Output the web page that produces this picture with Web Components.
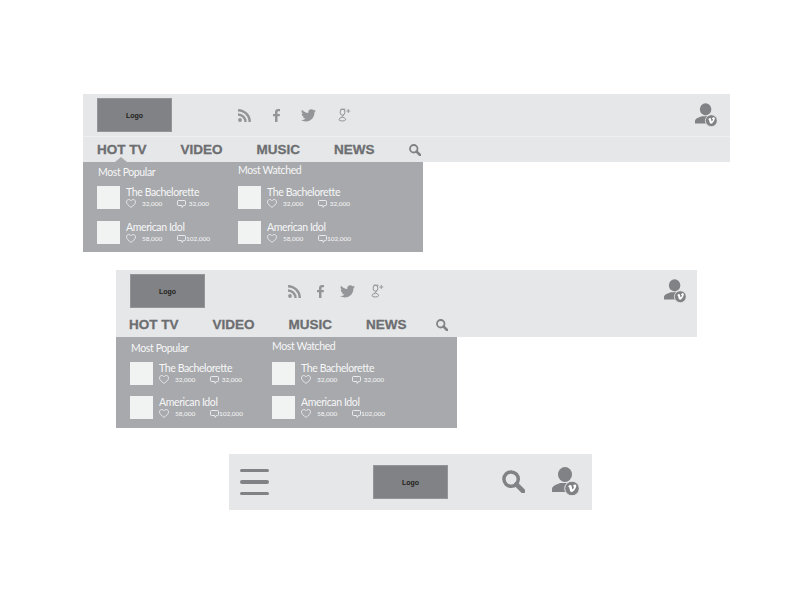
<!DOCTYPE html>
<html>
<head>
<meta charset="utf-8">
<title>Header wireframes</title>
<style>
  html, body { margin: 0; background: #fff; }
  body { font-family: "Lato", "Liberation Sans", sans-serif; }
  main { display: flex; flex-direction: column; padding-top: 94px; }
</style>
</head>
<body>
<main>
  <site-header divided caret style="margin-left:83px; width:647px; --top-h:42px; --nav-h:26px; --nav-pad:14px; --social-start:66px; --social-gap:21.5px; --end-pad:13px; --head-box:24px; --head-line:20px; --col-step:141px; --row-gap:12px">
    <show-column slot="columns">
      <span slot="heading">Most Popular</span>
      <show-row name="The Bachelorette" likes="32,000" comments="32,000"></show-row>
      <show-row name="American Idol" likes="58,000" comments="102,000"></show-row>
    </show-column>
    <show-column slot="columns" lift>
      <span slot="heading">Most Watched</span>
      <show-row name="The Bachelorette" likes="32,000" comments="32,000"></show-row>
      <show-row name="American Idol" likes="58,000" comments="102,000"></show-row>
    </show-column>
  </site-header>

  <site-header style="margin:18px 0 0 116px; width:581px; --top-h:42px; --nav-h:25px; --nav-pad:13px; --search-nudge:-5px; --social-start:83px; --social-gap:16px; --end-pad:11px; --head-box:25px; --head-line:22px; --col-step:142px; --row-gap:11px; --drop-w:341px; --drop-h:91px">
    <show-column slot="columns">
      <span slot="heading">Most Popular</span>
      <show-row name="The Bachelorette" likes="32,000" comments="32,000"></show-row>
      <show-row name="American Idol" likes="58,000" comments="102,000"></show-row>
    </show-column>
    <show-column slot="columns" lift>
      <span slot="heading">Most Watched</span>
      <show-row name="The Bachelorette" likes="32,000" comments="32,000"></show-row>
      <show-row name="American Idol" likes="58,000" comments="102,000"></show-row>
    </show-column>
  </site-header>

  <mobile-header style="margin:26px 0 0 229px"></mobile-header>
</main>

<script>
// grey logo block, same size in all three headers
class WireLogo extends HTMLElement {
  constructor() {
    super();
    this.attachShadow({ mode: 'open' }).innerHTML = `
      <style>
        :host { display: flex; flex: none; width: 75px; height: 34px; box-sizing: border-box;
                align-items: center; justify-content: center; background: #808285; border: 1px solid #939598;
                font: bold 7px "Liberation Sans", sans-serif; color: #231f20; }
      </style>
      Logo`;
  }
}

class SearchGlass extends HTMLElement {
  constructor() {
    super();
    const size = this.getAttribute('size') || 12;
    this.attachShadow({ mode: 'open' }).innerHTML = `
      <style>:host { display: block; flex: none; line-height: 0; }</style>
      <svg width="${size}" height="${size}" viewBox="0 0 24 24">
        <circle cx="9.5" cy="9.5" r="7.5" fill="none" stroke="#808285" stroke-width="3.6"/>
        <path d="M15 15l7 7" stroke="#808285" stroke-width="5" stroke-linecap="round"/>
      </svg>`;
  }
}

// person with the round vimeo badge on the shoulder
class UserBadge extends HTMLElement {
  constructor() {
    super();
    const w = this.getAttribute('width') || 22;
    const h = Math.round(w * 29 / 27);
    this.attachShadow({ mode: 'open' }).innerHTML = `
      <style>:host { display: block; flex: none; line-height: 0; }</style>
      <svg width="${w}" height="${h}" viewBox="0 0 27 29">
        <ellipse cx="13" cy="7.500" rx="7" ry="7.500" fill="#808285"/>
        <path d="M0 25v-3c0-3 4-4.500 8.500-6h9c3 1 6 2 7 4v5z" fill="#808285"/>
        <circle cx="20" cy="21.500" r="7.300" fill="#808285" stroke="#e6e7e8" stroke-width="1"/>
        <path d="M16.300 19.300c.9-.8 1.700-1.300 2.300-1.200.8.100 1 .9 1.200 2 .2 1 .4 2.200.8 2.200.5 0 1.500-1.800 1.300-2.600-.1-.5-.7-.4-1.200-.2.500-1.500 1.400-2.200 2.500-2.100 1 .1 1.300.9 1 2.200-.5 2-2.600 5.200-4.400 5.500-1.600.2-2-2.200-2.400-3.800-.2-.9-.4-1.500-.7-1.500l-.8.400z" fill="#fff"/>
      </svg>`;
  }
}

class SocialLinks extends HTMLElement {
  constructor() {
    super();
    this.attachShadow({ mode: 'open' }).innerHTML = `
      <style>
        :host { display: flex; align-items: center; gap: var(--social-gap, 21px); margin-left: var(--social-start, 66px); }
        svg { display: block; flex: none; }
      </style>
      <svg width="13" height="13" viewBox="0 0 13 13" fill="none" stroke="#939598" stroke-width="2.400">
        <circle cx="2" cy="11" r="1.900" fill="#939598" stroke="none"/>
        <path d="M0 5.500a7.500 7.500 0 0 1 7.500 7.500"/>
        <path d="M0 1.200a11.800 11.800 0 0 1 11.800 11.800"/>
      </svg>
      <svg width="7" height="13" viewBox="0 0 7 13">
        <path d="M2 13V7.200H0V5h2V3.300C2 1.100 3.200 0 5 0h2v2.300H5.700C4.800 2.300 4.500 2.700 4.500 3.500V5H7l-.4 2.200H4.500V13z" fill="#939598"/>
      </svg>
      <svg width="15" height="13" viewBox="0 0 24 20">
        <path transform="translate(0 -2.300)" d="M23.953 4.570a10 10 0 0 1-2.825.775 4.958 4.958 0 0 0 2.163-2.723c-.951.555-2.005.959-3.127 1.184a4.920 4.920 0 0 0-8.384 4.482C7.690 8.095 4.067 6.130 1.640 3.162a4.822 4.822 0 0 0-.666 2.475c0 1.710.870 3.213 2.188 4.096a4.904 4.904 0 0 1-2.228-.616v.060a4.923 4.923 0 0 0 3.946 4.827 4.996 4.996 0 0 1-2.212.085 4.936 4.936 0 0 0 4.604 3.417 9.867 9.867 0 0 1-6.102 2.105c-.390 0-.779-.023-1.170-.067a13.995 13.995 0 0 0 7.557 2.209c9.053 0 13.998-7.496 13.998-13.985 0-.210 0-.420-.015-.630A9.935 9.935 0 0 0 24 4.590z" fill="#939598"/>
      </svg>
      <svg width="13" height="14" viewBox="0 0 13 14" fill="none" stroke="#939598" stroke-width="1">
        <ellipse cx="4.500" cy="4.200" rx="2.400" ry="3"/>
        <path d="M2.500 1.200h5M6 7c-2 .6-2.500 1.700-1 2.300 2 .8 3 1.500 2.500 2.700-.6 1.300-6 1.400-6.500-.2-.3-1.200 1.500-2.300 3.500-2.500"/>
        <path d="M10.300 1v4M8.300 3h4" stroke-width=".9"/>
      </svg>`;
  }
}

// one thumbnail + title + like / comment counts
class ShowRow extends HTMLElement {
  constructor() {
    super();
    this.attachShadow({ mode: 'open' }).innerHTML = `
      <style>
        :host { display: flex; height: 23px; color: #f7f7f8; }
        .thumb { width: 23px; height: 23px; background: #f1f2f2; flex: none; }
        .info { margin-left: 6px; display: flex; flex-direction: column; }
        .name { font-size: 10.500px; line-height: 12px; letter-spacing: -.38px; white-space: nowrap; }
        .stats { display: flex; align-items: center; height: 11px; font-size: 6.500px; }
        .likes { width: 35px; margin-left: 6px; flex: none; }
        .comments { width: 23px; text-align: right; flex: none; }
        svg { display: block; flex: none; }
      </style>
      <div class="thumb"></div>
      <div class="info">
        <div class="name"></div>
        <div class="stats">
          <svg width="10" height="9" viewBox="0 0 10 9">
            <path d="M5 8.400C2.500 6.500.500 5 .500 2.900.500 1.500 1.500.500 2.800.500c1 0 1.700.500 2.200 1.300C5.500 1 6.200.500 7.200.500c1.300 0 2.300 1 2.300 2.400C9.500 5 7.500 6.500 5 8.400z" fill="none" stroke="#f1f2f2" stroke-width=".8"/>
          </svg>
          <span class="likes"></span>
          <svg width="9" height="8" viewBox="0 0 9 8">
            <path d="M1.300.500h6.400c.5 0 .8.300.8.800v3.400c0 .5-.3.800-.8.800H6.400L5.200 7.400 4.800 5.500H1.300c-.5 0-.8-.3-.8-.8V1.300c0-.5.300-.8.800-.8z" fill="none" stroke="#f1f2f2" stroke-width=".9"/>
          </svg>
          <span class="comments"></span>
        </div>
      </div>`;
    this.shadowRoot.querySelector('.name').textContent = this.getAttribute('name');
    this.shadowRoot.querySelector('.likes').textContent = this.getAttribute('likes');
    this.shadowRoot.querySelector('.comments').textContent = this.getAttribute('comments');
  }
}

class ShowColumn extends HTMLElement {
  constructor() {
    super();
    this.attachShadow({ mode: 'open' }).innerHTML = `
      <style>
        :host { display: block; }
        .head { height: var(--head-box, 24px); line-height: var(--head-line, 20px);
                padding-left: 1px; font-size: 10.500px; letter-spacing: -.38px; color: #f7f7f8; white-space: nowrap; }
        /* second column heading sits 2px higher in the reference */
        :host([lift]) .head { line-height: calc(var(--head-line, 20px) - 4px); padding-left: 0; }
        .rows { display: flex; flex-direction: column; gap: var(--row-gap, 12px); }
      </style>
      <div class="head"><slot name="heading"></slot></div>
      <div class="rows"><slot></slot></div>`;
  }
}

// desktop header: logo row, nav row and the open dropdown under it
class SiteHeader extends HTMLElement {
  constructor() {
    super();
    this.attachShadow({ mode: 'open' }).innerHTML = `
      <style>
        :host { display: block; flex: none; }
        .bar { background: #e6e7e8; }
        .top { display: flex; align-items: center; height: var(--top-h, 42px); padding: 0 var(--end-pad, 13px) 0 14px; box-sizing: border-box; }
        :host([divided]) .top { border-bottom: 1px solid #eeeff0; height: calc(var(--top-h, 42px) + 1px); }
        user-badge { margin-left: auto; }
        .nav { display: flex; align-items: center; gap: 34px; height: var(--nav-h, 26px); padding-left: var(--nav-pad, 14px);
               font: bold 13.500px "Liberation Sans", sans-serif; color: #6d6e71; -webkit-text-stroke: .3px #6d6e71; }
        :host([divided]) .nav { height: calc(var(--nav-h, 26px) - 1px); }
        .nav span { position: relative; white-space: nowrap; }
        .nav search-glass { margin-left: var(--search-nudge, 0); }
        .caret { display: none; position: absolute; left: 18px; top: 15px; width: 0; height: 0;
                 border: 6.500px solid transparent; border-top: 0; border-bottom: 5px solid #a7a9ac; }
        :host([caret]) .caret { display: block; }
        .drop { display: grid; grid-template-columns: var(--col-step, 141px) 1fr; box-sizing: border-box;
                width: var(--drop-w, 340px); height: var(--drop-h, 90px); padding-left: 14px; background: #a7a9ac; }
      </style>
      <div class="bar">
        <div class="top">
          <wire-logo></wire-logo>
          <social-links></social-links>
          <user-badge width="22"></user-badge>
        </div>
        <div class="nav">
          <span>HOT TV<i class="caret"></i></span>
          <span>VIDEO</span>
          <span>MUSIC</span>
          <span>NEWS</span>
          <search-glass size="12"></search-glass>
        </div>
      </div>
      <div class="drop"><slot name="columns"></slot></div>`;
  }
}

class MobileHeader extends HTMLElement {
  constructor() {
    super();
    this.attachShadow({ mode: 'open' }).innerHTML = `
      <style>
        :host { display: flex; flex: none; align-items: center; box-sizing: border-box; width: 363px; height: 56px;
                padding-left: 11px; background: #e6e7e8; }
        .burger { display: flex; flex-direction: column; gap: 8px; width: 29px; flex: none; margin-right: 104px; }
        .burger i { display: block; height: 3.500px; border-radius: 2px; background: #808285; }
        search-glass { margin: 0 27px 2px 54px; }
        user-badge { margin-bottom: 1px; }
      </style>
      <div class="burger"><i></i><i></i><i></i></div>
      <wire-logo></wire-logo>
      <search-glass size="23"></search-glass>
      <user-badge width="27"></user-badge>`;
  }
}

customElements.define('wire-logo', WireLogo);
customElements.define('search-glass', SearchGlass);
customElements.define('user-badge', UserBadge);
customElements.define('social-links', SocialLinks);
customElements.define('show-row', ShowRow);
customElements.define('show-column', ShowColumn);
customElements.define('site-header', SiteHeader);
customElements.define('mobile-header', MobileHeader);
</script>
</body>
</html>
